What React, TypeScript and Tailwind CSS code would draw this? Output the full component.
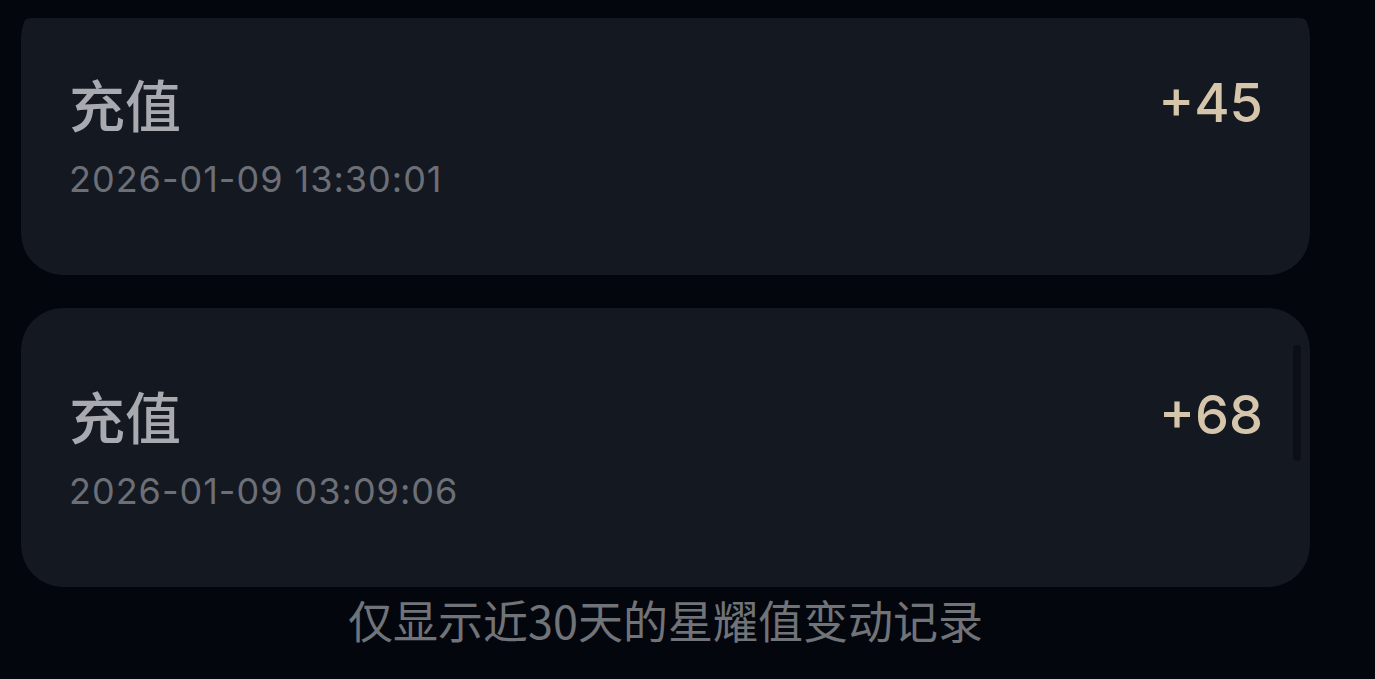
import React from 'react';

const records = [
  { title: '充值', time: '2026-01-09 13:30:01', amount: '+45' },
  { title: '充值', time: '2026-01-09 03:09:06', amount: '+68' },
];

export default function App() {
  return (
    <div className="min-h-screen w-full bg-[#03060d] pt-[18px] pl-[21px]">
      <div className="relative w-[1289px] h-[661px] overflow-hidden rounded-t-[10px]">
        <div className="flex flex-col gap-[33px] -mt-[22px]">
          {records.map((r, i) => (
            <div key={i} className="h-[279px] rounded-[42px] bg-[#141821] px-[48px] pt-[75px]">
              <div className="flex items-center justify-between">
                <span
                  className="text-[56px] leading-[64px] font-medium text-[#a8aaaf]"
                  style={{ fontFamily: '"Noto Sans CJK SC", "Noto Sans", sans-serif' }}
                >
                  {r.title}
                </span>
                <span
                  className="text-[54px] leading-[64px] font-medium text-[#d5c5aa] -mr-[1px]"
                  style={{ fontFamily: 'Inter, "Liberation Sans", sans-serif' }}
                >
                  {r.amount}
                </span>
              </div>
              <div
                className="mt-[22px] text-[36px] leading-[44px] tracking-[1px] text-[#6c6f76]"
                style={{ fontFamily: 'Inter, "Liberation Sans", sans-serif' }}
              >
                {r.time}
              </div>
            </div>
          ))}
        </div>
        <p
          className="mt-[9px] text-center text-[45px] leading-[48px] text-[#707378]"
          style={{ fontFamily: '"Noto Sans CJK SC", "Noto Sans", sans-serif' }}
        >
          仅显示近30天的星耀值变动记录
        </p>
        <div className="absolute right-[9px] top-[327px] h-[116px] w-[8px] rounded-full bg-[#0c0f15]" />
      </div>
    </div>
  );
}
